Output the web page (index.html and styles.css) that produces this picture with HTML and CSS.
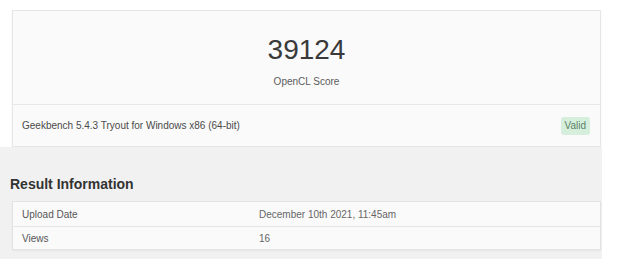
FILE: index.html
```html
<!DOCTYPE html>
<html lang="en">

<head>
    <meta charset="utf-8">
    <meta name="viewport" content="width=device-width, initial-scale=1.0">
    <title>Geekbench Result</title>
    <link rel="stylesheet" href="styles.css">
</head>

<body>
    <div class="page">
        <section class="score-card">
            <div class="score">
                <div class="score-value">39124</div>
                <div class="score-label">OpenCL Score</div>
            </div>
            <div class="score-footer">
                <span>Geekbench 5.4.3 Tryout for Windows x86 (64-bit)</span>
                <span class="badge">Valid</span>
            </div>
        </section>

        <section class="info">
            <h2>Result Information</h2>
            <div class="info-table">
                <div class="info-row">
                    <span class="info-name">Upload Date</span>
                    <span class="info-value">December 10th 2021, 11:45am</span>
                </div>
                <div class="info-row">
                    <span class="info-name">Views</span>
                    <span class="info-value">16</span>
                </div>
            </div>
        </section>
    </div>
</body>

</html>
```

FILE: styles.css
```css
        body {
            margin: 0;
            background-color: white;
            font-family: "Liberation Sans", Arial, sans-serif;
            color: #444;
        }

        .page {
            width: 602px;
            height: 259px;
            display: flex;
            flex-direction: column;
        }

        .score-card {
            box-sizing: border-box;
            width: 589px;
            margin: 10px 0 0 12px;
            background-color: #fafafa;
            border: 1px solid #e6e6e6;
            box-shadow: 0 1px 2px rgba(0, 0, 0, 0.06);
        }

        .score {
            height: 94px;
            box-sizing: border-box;
            padding-top: 23px;
            text-align: center;
            border-bottom: 1px solid #e8e8e8;
        }

        .score-value {
            font-size: 28px;
            line-height: 32px;
            color: #3a3a3a;
        }

        .score-label {
            margin-top: 9px;
            font-size: 10px;
            line-height: 14px;
            color: #5a5a5a;
        }

        .score-footer {
            height: 41px;
            display: flex;
            align-items: center;
            justify-content: space-between;
            padding: 0 10px 0 9px;
            font-size: 10px;
            color: #4a4a4a;
        }

        .badge {
            background-color: #d6efdd;
            color: #5b7f66;
            padding: 3px 4px;
            border-radius: 3px;
            line-height: 12px;
        }

        .info {
            flex: 1;
            background-color: #f1f1f1;
            padding-top: 28px;
        }

        .info h2 {
            margin: 0 0 8px 10px;
            font-size: 14px;
            line-height: 18px;
            color: #333;
        }

        .info-table {
            box-sizing: border-box;
            width: 589px;
            margin-left: 12px;
            background-color: #fafafa;
            border: 1px solid #e3e3e3;
            box-shadow: 0 1px 2px rgba(0, 0, 0, 0.05);
        }

        .info-row {
            display: grid;
            grid-template-columns: 237px 1fr;
            height: 24px;
            align-items: center;
            padding-left: 9px;
            font-size: 10px;
            color: #555;
        }

        .info-value {
            color: #666;
        }

        .info-row + .info-row {
            border-top: 1px solid #e6e6e6;
            height: 22px;
        }
```
